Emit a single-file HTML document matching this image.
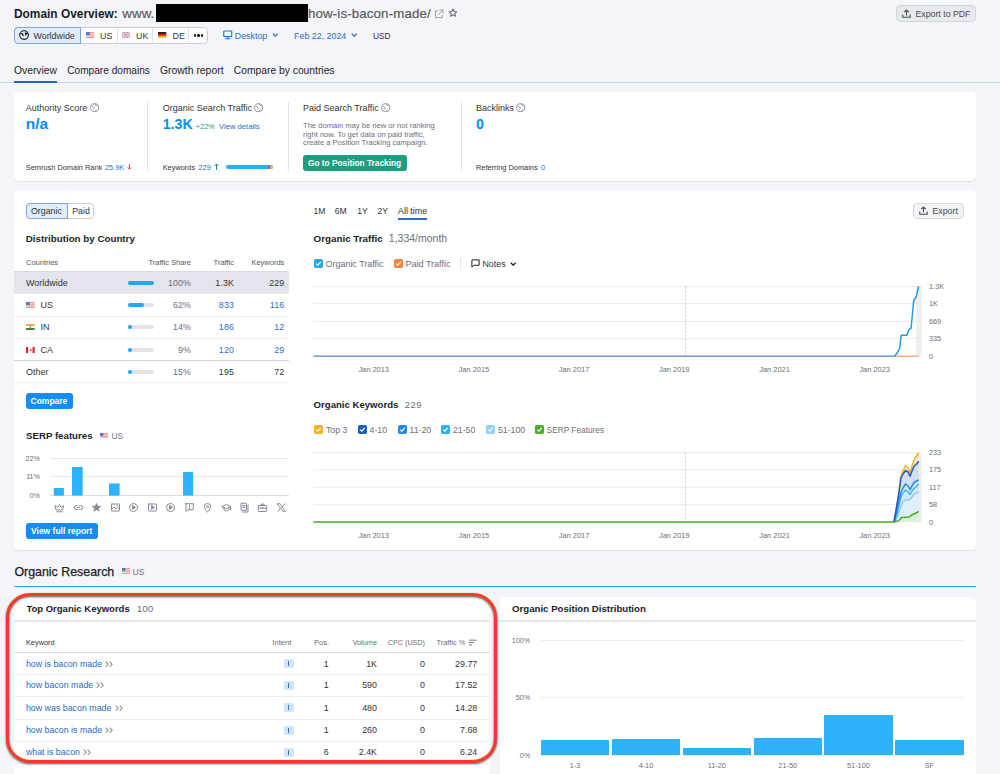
<!DOCTYPE html>
<html><head><meta charset="utf-8"><title>Domain Overview</title>
<style>
html,body{margin:0;padding:0;}
body{width:1000px;height:774px;overflow:hidden;position:relative;background:#f4f5f9;font-family:"Liberation Sans",sans-serif;}
.t{position:absolute;white-space:nowrap;line-height:1;}
.r{position:absolute;}
</style></head><body>
<div class="t" style="left:14.00px;top:9.00px;font-size:11.9px;font-weight:700;color:#1b1d26;">Domain Overview:</div>
<div class="t" style="left:122.30px;top:7.00px;font-size:13.4px;color:#585a64;-webkit-text-stroke:.2px #585a64;">www.</div>
<div class="r" style="left:155.50px;top:4.00px;width:152.00px;height:17.50px;background:#000;"></div>
<div class="t" style="left:308.00px;top:7.00px;font-size:13.3px;color:#585a64;-webkit-text-stroke:.2px #585a64;letter-spacing:.13px;">how-is-bacon-made/</div>
<svg class="r" style="left:434px;top:8.8px" width="10" height="10" viewBox="0 0 11 11" fill="none" stroke="#9a9ca6" stroke-width="1.1"><path d="M4.5 2H1.5v7.5H9V6.5"/><path d="M6 1h4v4M10 1L5 6"/></svg>
<svg class="r" style="left:447.6px;top:8.2px" width="10" height="10" viewBox="0 0 11 11" fill="none" stroke="#6c6e79" stroke-width="1.15" stroke-linejoin="round"><path d="M5.5 1l1.3 2.8 3 .3-2.3 2 .7 3-2.7-1.6-2.7 1.6.7-3-2.3-2 3-.3z"/></svg>
<div class="r" style="left:14.00px;top:27.00px;width:194.00px;height:16.50px;border:1px solid #c9ccd3;border-radius:4px;background:#fff;box-sizing:border-box;"></div>
<div class="r" style="left:14.00px;top:27.00px;width:67.00px;height:16.50px;border:1px solid #7da7e3;border-radius:4px 0 0 4px;background:#e1ecfc;box-sizing:border-box;"></div>
<div class="r" style="left:116.50px;top:28.00px;width:1.00px;height:14.50px;background:#dfe1e6;"></div>
<div class="r" style="left:152.30px;top:28.00px;width:1.00px;height:14.50px;background:#dfe1e6;"></div>
<div class="r" style="left:188.30px;top:28.00px;width:1.00px;height:14.50px;background:#dfe1e6;"></div>
<svg class="r" style="left:18.8px;top:30.2px" width="10.2" height="10.2" viewBox="0 0 12 12"><circle cx="6" cy="6" r="5.1" fill="none" stroke="#111" stroke-width="1.3"/><path d="M1.5 4.3C2.8 3.2 4.3 3.4 4.8 4.3L5.8 7.2C5.1 7.6 4.4 6.9 4 6.2L3 4.9Z" fill="#111"/><path d="M6.8 3.2C7.6 2.6 9.6 2.8 10.5 4L8.9 5.2 8 7C7.4 6.4 6.9 4.4 6.8 3.2Z" fill="#111"/></svg>
<div class="t" style="left:33.50px;top:32.00px;font-size:8.9px;color:#333438;">Worldwide</div>
<svg class="r" style="left:86px;top:32.3px" width="8.4" height="6" viewBox="0 0 14 10" preserveAspectRatio="none"><rect width="14" height="10" fill="#f58a8a"/><rect y="1.4" width="14" height="1.4" fill="#fbe3e3"/><rect y="4.2" width="14" height="1.4" fill="#fbe3e3"/><rect y="7" width="14" height="1.4" fill="#fbe3e3"/><rect width="6" height="5" fill="#5a73c4"/></svg>
<div class="t" style="left:100.00px;top:32.00px;font-size:8.9px;color:#333438;">US</div>
<svg class="r" style="left:122.4px;top:32.3px" width="8" height="6" viewBox="0 0 14 10" preserveAspectRatio="none"><rect width="14" height="10" fill="#6d7fc9"/><path d="M0 0L14 10M14 0L0 10" stroke="#fff" stroke-width="2.4"/><path d="M0 0L14 10M14 0L0 10" stroke="#e87a8a" stroke-width="1"/><path d="M7 0V10M0 5H14" stroke="#fff" stroke-width="3"/><path d="M7 0V10M0 5H14" stroke="#e86a7a" stroke-width="1.6"/></svg>
<div class="t" style="left:136.00px;top:32.00px;font-size:8.9px;color:#333438;">UK</div>
<svg class="r" style="left:158.4px;top:32.3px" width="8.3" height="6" viewBox="0 0 14 10" preserveAspectRatio="none"><rect width="14" height="3.4" fill="#222"/><rect y="3.3" width="14" height="3.4" fill="#e0302a"/><rect y="6.6" width="14" height="3.4" fill="#f6c026"/></svg>
<div class="t" style="left:172.50px;top:32.00px;font-size:8.9px;color:#333438;">DE</div>
<div class="r" style="left:193.60px;top:34.30px;width:2.40px;height:2.40px;background:#1b1d26;border-radius:50%;"></div>
<div class="r" style="left:197.20px;top:34.30px;width:2.40px;height:2.40px;background:#1b1d26;border-radius:50%;"></div>
<div class="r" style="left:200.80px;top:34.30px;width:2.40px;height:2.40px;background:#1b1d26;border-radius:50%;"></div>
<svg class="r" style="left:223px;top:30px" width="9.5" height="10" viewBox="0 0 10 10" fill="none" stroke="#2a6fd0" stroke-width="1.2"><rect x="0.8" y="0.8" width="8.4" height="5.8" rx="0.6"/><path d="M5 6.6v2.2M2.5 9h5"/></svg>
<div class="t" style="left:234.80px;top:32.00px;font-size:8.85px;color:#2a6fd0;">Desktop</div>
<svg class="r" style="left:272px;top:33px" width="6.5" height="4.5" viewBox="0 0 7 5" fill="none" stroke="#2a6fd0" stroke-width="1.3"><path d="M.8 .8L3.5 3.6 6.2 .8"/></svg>
<div class="t" style="left:294.10px;top:32.00px;font-size:8.85px;color:#2a6fd0;">Feb 22, 2024</div>
<svg class="r" style="left:350.8px;top:33px" width="6.5" height="4.5" viewBox="0 0 7 5" fill="none" stroke="#2a6fd0" stroke-width="1.3"><path d="M.8 .8L3.5 3.6 6.2 .8"/></svg>
<div class="t" style="left:373.00px;top:32.00px;font-size:8.3px;color:#333438;">USD</div>
<div class="r" style="left:896.00px;top:5.40px;width:79.60px;height:16.20px;background:#e8e9ee;border:1px solid #d3d5dc;border-radius:4px;box-sizing:border-box;"></div>
<svg class="r" style="left:901.5px;top:9px" width="9" height="9" viewBox="0 0 9 9" fill="none" stroke="#4a4c55" stroke-width="1.1"><path d="M4.5 6.5V1M2.2 3.2L4.5 1l2.3 2.2M.8 5.5v2.7h7.4V5.5"/></svg>
<div class="t" style="left:915.50px;top:10.00px;font-size:8.75px;color:#4a4c55;">Export to PDF</div>
<div class="t" style="left:14.00px;top:66.00px;font-size:10.3px;color:#1b1d26;">Overview</div>
<div class="t" style="left:67.20px;top:66.00px;font-size:10.15px;color:#1b1d26;">Compare domains</div>
<div class="t" style="left:160.00px;top:66.00px;font-size:10.4px;color:#1b1d26;">Growth report</div>
<div class="t" style="left:233.80px;top:66.00px;font-size:10.3px;color:#1b1d26;">Compare by countries</div>
<div class="r" style="left:0.00px;top:82.00px;width:1000.00px;height:1.00px;background:#d5d7de;"></div>
<div class="r" style="left:14.00px;top:80.80px;width:43.00px;height:1.80px;background:#1f66d1;"></div>
<div class="r" style="left:14.00px;top:92.00px;width:962.00px;height:89.00px;background:#fff;border-radius:5px;box-shadow:0 1px 1px rgba(0,0,0,.08);"></div>
<div class="t" style="left:25.70px;top:104.00px;font-size:9px;color:#333438;">Authority Score</div>
<svg class="r" style="left:89.7px;top:102.9px" width="9.4" height="9.4" viewBox="0 0 10 10" fill="none" stroke="#8a8d9a" stroke-width="1"><circle cx="5" cy="5" r="4.3"/><path d="M2.2 3.8c.8-.2 1.4 0 1.7.6s.9.7.6 1.6-.8.6-1.2 1.2M5.6 1.2c0 .7.3 1.2 1 1.2s1.3.2 1.6 1M5.8 8.7c.1-.7.5-1.3 1.3-1.5"/></svg>
<div class="t" style="left:25.70px;top:116.00px;font-size:15.5px;font-weight:700;color:#008ff8;">n/a</div>
<div class="t" style="left:25.80px;top:164.00px;font-size:7.4px;color:#333438;">Semrush Domain Rank</div>
<div class="t" style="left:105.00px;top:164.00px;font-size:7.3px;color:#2c6ecb;">25.9K</div>
<svg class="r" style="left:127px;top:164px" width="5" height="6" viewBox="0 0 5 7" fill="none" stroke="#e5343a" stroke-width="1"><path d="M2.5 0v6M.5 4l2 2 2-2"/></svg>
<div class="r" style="left:147.30px;top:102.00px;width:1.00px;height:69.00px;background:#e3e4e8;"></div>
<div class="t" style="left:162.70px;top:104.00px;font-size:9px;color:#333438;">Organic Search Traffic</div>
<svg class="r" style="left:254.2px;top:102.9px" width="9.4" height="9.4" viewBox="0 0 10 10" fill="none" stroke="#8a8d9a" stroke-width="1"><circle cx="5" cy="5" r="4.3"/><path d="M2.2 3.8c.8-.2 1.4 0 1.7.6s.9.7.6 1.6-.8.6-1.2 1.2M5.6 1.2c0 .7.3 1.2 1 1.2s1.3.2 1.6 1M5.8 8.7c.1-.7.5-1.3 1.3-1.5"/></svg>
<div class="t" style="left:162.70px;top:117.00px;font-size:14.2px;font-weight:700;color:#008ff8;">1.3K</div>
<div class="t" style="left:195.80px;top:123.00px;font-size:7.4px;color:#1a9a74;letter-spacing:-.15px;">+22%</div>
<div class="t" style="left:219.00px;top:123.00px;font-size:7.65px;color:#2c6ecb;">View details</div>
<div class="t" style="left:162.70px;top:164.00px;font-size:7.4px;color:#333438;">Keywords</div>
<div class="t" style="left:198.50px;top:164.00px;font-size:7.4px;color:#2c6ecb;">229</div>
<svg class="r" style="left:214px;top:163px" width="5" height="7" viewBox="0 0 5 7" fill="none" stroke="#1a9a74" stroke-width="1"><path d="M2.5 7V1M.5 3l2-2 2 2"/></svg>
<div class="r" style="left:226.00px;top:164.80px;width:47.00px;height:4.00px;background:#2bb0fb;border-radius:2px;"></div>
<div class="r" style="left:267.50px;top:164.80px;width:2.00px;height:4.00px;background:#8a5cf0;"></div>
<div class="r" style="left:269.50px;top:164.80px;width:3.50px;height:4.00px;background:#ffb020;border-radius:0 2px 2px 0;"></div>
<div class="r" style="left:288.00px;top:102.00px;width:1.00px;height:69.00px;background:#e3e4e8;"></div>
<div class="t" style="left:303.00px;top:104.00px;font-size:9px;color:#333438;">Paid Search Traffic</div>
<svg class="r" style="left:381.2px;top:102.9px" width="9.4" height="9.4" viewBox="0 0 10 10" fill="none" stroke="#8a8d9a" stroke-width="1"><circle cx="5" cy="5" r="4.3"/><path d="M2.2 3.8c.8-.2 1.4 0 1.7.6s.9.7.6 1.6-.8.6-1.2 1.2M5.6 1.2c0 .7.3 1.2 1 1.2s1.3.2 1.6 1M5.8 8.7c.1-.7.5-1.3 1.3-1.5"/></svg>
<div class="t" style="left:303.00px;top:122.00px;font-size:7.6px;color:#6c6e79;">The domain may be new or not ranking</div>
<div class="t" style="left:303.00px;top:131.00px;font-size:7.6px;color:#6c6e79;">right now. To get data on paid traffic,</div>
<div class="t" style="left:303.00px;top:139.00px;font-size:7.6px;color:#6c6e79;">create a Position Tracking campaign.</div>
<div class="r" style="left:303.00px;top:155.00px;width:103.50px;height:15.50px;background:#1b9e7e;border-radius:3px;"></div>
<div class="t" style="left:308.00px;top:159.00px;font-size:8.3px;font-weight:700;color:#fff;">Go to Position Tracking</div>
<div class="r" style="left:461.00px;top:102.00px;width:1.00px;height:69.00px;background:#e3e4e8;"></div>
<div class="t" style="left:476.00px;top:104.00px;font-size:9px;color:#333438;">Backlinks</div>
<svg class="r" style="left:516.2px;top:102.9px" width="9.4" height="9.4" viewBox="0 0 10 10" fill="none" stroke="#8a8d9a" stroke-width="1"><circle cx="5" cy="5" r="4.3"/><path d="M2.2 3.8c.8-.2 1.4 0 1.7.6s.9.7.6 1.6-.8.6-1.2 1.2M5.6 1.2c0 .7.3 1.2 1 1.2s1.3.2 1.6 1M5.8 8.7c.1-.7.5-1.3 1.3-1.5"/></svg>
<div class="t" style="left:476.00px;top:117.00px;font-size:14.2px;font-weight:700;color:#008ff8;">0</div>
<div class="t" style="left:476.00px;top:164.00px;font-size:7.4px;color:#333438;">Referring Domains</div>
<div class="t" style="left:541.00px;top:164.00px;font-size:7.4px;color:#2c6ecb;">0</div>
<div class="r" style="left:14.00px;top:190.00px;width:962.00px;height:359.80px;background:#fff;border-radius:5px;box-shadow:0 1px 1px rgba(0,0,0,.08);"></div>
<div class="r" style="left:26.00px;top:202.50px;width:68.00px;height:16.50px;border:1px solid #c9ccd3;border-radius:4px;background:#fff;box-sizing:border-box;"></div>
<div class="r" style="left:26.00px;top:202.50px;width:41.80px;height:16.50px;border:1px solid #7da7e3;border-radius:4px 0 0 4px;background:#e1ecfc;box-sizing:border-box;"></div>
<div class="t" style="left:31.00px;top:207.00px;font-size:8.8px;color:#333438;">Organic</div>
<div class="t" style="left:72.20px;top:207.00px;font-size:8.8px;color:#333438;">Paid</div>
<div class="t" style="left:25.80px;top:234.00px;font-size:9.78px;font-weight:700;color:#1b1d26;">Distribution by Country</div>
<div class="t" style="left:26.00px;top:259.00px;font-size:7.5px;color:#55575f;">Countries</div>
<div class="t" style="right:809.00px;top:259.00px;font-size:7.5px;color:#55575f;">Traffic Share</div>
<div class="t" style="right:766.00px;top:259.00px;font-size:7.5px;color:#55575f;">Traffic</div>
<div class="t" style="right:715.70px;top:259.00px;font-size:7.5px;color:#55575f;">Keywords</div>
<div class="r" style="left:14.00px;top:270.80px;width:275.00px;height:1.00px;background:#d9dbe1;"></div>
<div class="r" style="left:14.00px;top:271.80px;width:275.00px;height:22.10px;background:#e4e5ec;"></div>
<div class="t" style="left:26.00px;top:279.00px;font-size:9px;color:#333438;">Worldwide</div>
<div class="r" style="left:127.70px;top:280.85px;width:25.90px;height:4.00px;background:#e2e4e9;border-radius:2px;"></div>
<div class="r" style="left:127.70px;top:280.85px;width:25.90px;height:4.00px;background:#1ea7fd;border-radius:2px;"></div>
<div class="t" style="right:809.00px;top:279.00px;font-size:8.8px;color:#6c6e79;letter-spacing:.15px;">100%</div>
<div class="t" style="right:766.00px;top:279.00px;font-size:8.8px;color:#333438;letter-spacing:.15px;">1.3K</div>
<div class="t" style="right:715.70px;top:279.00px;font-size:8.8px;color:#333438;letter-spacing:.15px;">229</div>
<svg class="r" style="left:26px;top:302.0px" width="8.7" height="6" viewBox="0 0 14 10" preserveAspectRatio="none"><rect width="14" height="10" fill="#f58a8a"/><rect y="1.4" width="14" height="1.4" fill="#fbe3e3"/><rect y="4.2" width="14" height="1.4" fill="#fbe3e3"/><rect y="7" width="14" height="1.4" fill="#fbe3e3"/><rect width="6" height="5" fill="#5a73c4"/></svg>
<div class="t" style="left:40.40px;top:301.00px;font-size:9px;color:#333438;">US</div>
<div class="r" style="left:127.70px;top:303.00px;width:25.90px;height:4.00px;background:#e2e4e9;border-radius:2px;"></div>
<div class="r" style="left:127.70px;top:303.00px;width:16.06px;height:4.00px;background:#1ea7fd;border-radius:2px;"></div>
<div class="t" style="right:809.00px;top:301.00px;font-size:8.8px;color:#6c6e79;letter-spacing:.15px;">62%</div>
<div class="t" style="right:766.00px;top:301.00px;font-size:8.8px;color:#2c6ecb;letter-spacing:.15px;">833</div>
<div class="t" style="right:715.70px;top:301.00px;font-size:8.8px;color:#2c6ecb;letter-spacing:.15px;">116</div>
<div class="r" style="left:14.00px;top:293.40px;width:275.00px;height:1.00px;background:#eceef1;"></div>
<svg class="r" style="left:26px;top:324.25px" width="8.7" height="6" viewBox="0 0 14 10" preserveAspectRatio="none"><rect width="14" height="3.4" fill="#f7a35c"/><rect y="3.3" width="14" height="3.4" fill="#fff"/><rect y="6.6" width="14" height="3.4" fill="#3a8a3a"/><circle cx="7" cy="5" r="1.1" fill="#334"/></svg>
<div class="t" style="left:40.40px;top:323.00px;font-size:9px;color:#333438;">IN</div>
<div class="r" style="left:127.70px;top:325.25px;width:25.90px;height:4.00px;background:#e2e4e9;border-radius:2px;"></div>
<div class="r" style="left:127.70px;top:325.25px;width:4.00px;height:4.00px;background:#1ea7fd;border-radius:2px;"></div>
<div class="t" style="right:809.00px;top:323.00px;font-size:8.8px;color:#6c6e79;letter-spacing:.15px;">14%</div>
<div class="t" style="right:766.00px;top:323.00px;font-size:8.8px;color:#2c6ecb;letter-spacing:.15px;">186</div>
<div class="t" style="right:715.70px;top:323.00px;font-size:8.8px;color:#2c6ecb;letter-spacing:.15px;">12</div>
<div class="r" style="left:14.00px;top:315.60px;width:275.00px;height:1.00px;background:#eceef1;"></div>
<svg class="r" style="left:26px;top:346.5px" width="8.7" height="6" viewBox="0 0 14 10" preserveAspectRatio="none"><rect width="14" height="10" fill="#fff"/><rect width="3.5" height="10" fill="#e5202a"/><rect x="10.5" width="3.5" height="10" fill="#e5202a"/><path d="M7 2l.8 1.6 1-.4-.4 2 1-.3-.5 1.3H6.1l-.5-1.3 1 .3-.4-2 1 .4z" fill="#e5202a"/></svg>
<div class="t" style="left:40.40px;top:346.00px;font-size:9px;color:#333438;">CA</div>
<div class="r" style="left:127.70px;top:347.50px;width:25.90px;height:4.00px;background:#e2e4e9;border-radius:2px;"></div>
<div class="r" style="left:127.70px;top:347.50px;width:4.00px;height:4.00px;background:#1ea7fd;border-radius:2px;"></div>
<div class="t" style="right:809.00px;top:346.00px;font-size:8.8px;color:#6c6e79;letter-spacing:.15px;">9%</div>
<div class="t" style="right:766.00px;top:346.00px;font-size:8.8px;color:#2c6ecb;letter-spacing:.15px;">120</div>
<div class="t" style="right:715.70px;top:346.00px;font-size:8.8px;color:#2c6ecb;letter-spacing:.15px;">29</div>
<div class="r" style="left:14.00px;top:337.90px;width:275.00px;height:1.00px;background:#eceef1;"></div>
<div class="t" style="left:26.00px;top:368.00px;font-size:9px;color:#333438;">Other</div>
<div class="r" style="left:127.70px;top:369.70px;width:25.90px;height:4.00px;background:#e2e4e9;border-radius:2px;"></div>
<div class="r" style="left:127.70px;top:369.70px;width:4.00px;height:4.00px;background:#1ea7fd;border-radius:2px;"></div>
<div class="t" style="right:809.00px;top:368.00px;font-size:8.8px;color:#6c6e79;letter-spacing:.15px;">15%</div>
<div class="t" style="right:766.00px;top:368.00px;font-size:8.8px;color:#333438;letter-spacing:.15px;">195</div>
<div class="t" style="right:715.70px;top:368.00px;font-size:8.8px;color:#333438;letter-spacing:.15px;">72</div>
<div class="r" style="left:14.00px;top:360.10px;width:275.00px;height:1.00px;background:#d4d6dc;"></div>
<div class="r" style="left:14.00px;top:382.30px;width:275.00px;height:1.00px;background:#eceef1;"></div>
<div class="r" style="left:26.00px;top:392.70px;width:46.70px;height:16.00px;background:#168cf6;border-radius:3px;"></div>
<div class="t" style="left:30.50px;top:397.00px;font-size:8.5px;font-weight:700;color:#fff;">Compare</div>
<div class="t" style="left:26.00px;top:431.00px;font-size:9.7px;font-weight:700;color:#1b1d26;">SERP features</div>
<svg class="r" style="left:100px;top:432.5px" width="8" height="5.6" viewBox="0 0 14 10" preserveAspectRatio="none"><rect width="14" height="10" fill="#f58a8a"/><rect y="1.4" width="14" height="1.4" fill="#fbe3e3"/><rect y="4.2" width="14" height="1.4" fill="#fbe3e3"/><rect y="7" width="14" height="1.4" fill="#fbe3e3"/><rect width="6" height="5" fill="#5a73c4"/></svg>
<div class="t" style="left:111.50px;top:432.00px;font-size:8.3px;color:#6c6e79;">US</div>
<div class="t" style="right:960.00px;top:455.00px;font-size:7.2px;color:#6c6e79;">22%</div>
<div class="r" style="left:49.80px;top:457.80px;width:239.60px;height:1.00px;background:#e8e9ee;"></div>
<div class="t" style="right:960.00px;top:473.00px;font-size:7.2px;color:#6c6e79;">11%</div>
<div class="r" style="left:49.80px;top:476.10px;width:239.60px;height:1.00px;background:#e8e9ee;"></div>
<div class="t" style="right:960.00px;top:492.00px;font-size:7.2px;color:#6c6e79;">0%</div>
<div class="r" style="left:49.80px;top:494.50px;width:239.60px;height:1.00px;background:#dcdee4;"></div>
<svg class="r" style="left:0;top:0" width="300" height="500" viewBox="0 0 300 500"><rect x="53.8" y="488" width="10.100000000000001" height="7.600000000000023" fill="#2db2fd"/><rect x="72" y="467" width="10.700000000000003" height="28.600000000000023" fill="#2db2fd"/><rect x="109" y="483.5" width="10.599999999999994" height="12.100000000000023" fill="#2db2fd"/><rect x="183" y="472" width="10.199999999999989" height="23.600000000000023" fill="#2db2fd"/></svg>
<div class="r" style="left:26.00px;top:523.00px;width:71.70px;height:16.30px;background:#168cf6;border-radius:3px;"></div>
<div class="t" style="left:31.00px;top:527.00px;font-size:8.5px;font-weight:700;color:#fff;">View full report</div>
<svg class="r" style="left:54.20px;top:502.2px" width="11" height="11" viewBox="-.5 -.5 11 11" fill="none" stroke="#888b99" stroke-width="1" stroke-linejoin="round" stroke-linecap="round"><path d="M.8 3.2L3.2 5 5 2.2 6.8 5l2.4-1.8L8 7.4H2z" fill="none"/><path d="M2.2 9.3h5.6"/></svg>
<svg class="r" style="left:72.68px;top:502.2px" width="11" height="11" viewBox="-.5 -.5 11 11" fill="none" stroke="#888b99" stroke-width="1" stroke-linejoin="round" stroke-linecap="round"><path d="M4 3H2.8a2 2 0 000 4H4M6 3h1.2a2 2 0 010 4H6M3.5 5h3"/></svg>
<svg class="r" style="left:91.16px;top:502.2px" width="11" height="11" viewBox="-.5 -.5 11 11" fill="none" stroke="#888b99" stroke-width="1" stroke-linejoin="round" stroke-linecap="round"><path d="M5 .2l1.45 3.05 3.35.35-2.55 2.25.75 3.35L5 7.45 2 9.2l.75-3.35L.2 3.6l3.35-.35z" fill="#888b99" stroke="none"/></svg>
<svg class="r" style="left:109.64px;top:502.2px" width="11" height="11" viewBox="-.5 -.5 11 11" fill="none" stroke="#888b99" stroke-width="1" stroke-linejoin="round" stroke-linecap="round"><rect x="1" y="1.5" width="8" height="7" rx=".5"/><path d="M1 7l2.5-2.5 2 2 1.5-1.5L9 7M6.5 3.5h1"/></svg>
<svg class="r" style="left:128.12px;top:502.2px" width="11" height="11" viewBox="-.5 -.5 11 11" fill="none" stroke="#888b99" stroke-width="1" stroke-linejoin="round" stroke-linecap="round"><circle cx="5" cy="5" r="4"/><path d="M4 3.3v3.4L6.6 5z" fill="#888b99"/></svg>
<svg class="r" style="left:146.60px;top:502.2px" width="11" height="11" viewBox="-.5 -.5 11 11" fill="none" stroke="#888b99" stroke-width="1" stroke-linejoin="round" stroke-linecap="round"><rect x="1" y="1.5" width="8" height="7" rx=".5"/><path d="M4 3.3v3.4L6.6 5z" fill="#888b99"/></svg>
<svg class="r" style="left:165.08px;top:502.2px" width="11" height="11" viewBox="-.5 -.5 11 11" fill="none" stroke="#888b99" stroke-width="1" stroke-linejoin="round" stroke-linecap="round"><circle cx="5" cy="5" r="4"/><path d="M4 3.3v3.4L6.6 5z" fill="#888b99"/></svg>
<svg class="r" style="left:183.56px;top:502.2px" width="11" height="11" viewBox="-.5 -.5 11 11" fill="none" stroke="#888b99" stroke-width="1" stroke-linejoin="round" stroke-linecap="round"><path d="M1.2 1.2h7.6v6H3.5L1.5 9V1.2z"/><path d="M5 2.6v2M5 5.6v.4"/></svg>
<svg class="r" style="left:202.04px;top:502.2px" width="11" height="11" viewBox="-.5 -.5 11 11" fill="none" stroke="#888b99" stroke-width="1" stroke-linejoin="round" stroke-linecap="round"><path d="M5 9.3S1.8 6.3 1.8 4.2a3.2 3.2 0 016.4 0C8.2 6.3 5 9.3 5 9.3z"/><circle cx="5" cy="4.2" r="1"/></svg>
<svg class="r" style="left:220.52px;top:502.2px" width="11" height="11" viewBox="-.5 -.5 11 11" fill="none" stroke="#888b99" stroke-width="1" stroke-linejoin="round" stroke-linecap="round"><path d="M.5 4L5 2l4.5 2L5 6z"/><path d="M2.5 5v2.5c1.5 1.2 3.5 1.2 5 0V5M9 4.2v3"/></svg>
<svg class="r" style="left:239.00px;top:502.2px" width="11" height="11" viewBox="-.5 -.5 11 11" fill="none" stroke="#888b99" stroke-width="1" stroke-linejoin="round" stroke-linecap="round"><rect x="1.5" y=".8" width="5.5" height="7" rx=".4"/><path d="M8.5 2.5v7H3M3 3h2.5M3 4.8h2.5"/></svg>
<svg class="r" style="left:257.48px;top:502.2px" width="11" height="11" viewBox="-.5 -.5 11 11" fill="none" stroke="#888b99" stroke-width="1" stroke-linejoin="round" stroke-linecap="round"><rect x=".8" y="3" width="8.4" height="6" rx=".6"/><path d="M3.5 3V1.6h3V3M.8 5.6h8.4M5 5v1.2"/></svg>
<svg class="r" style="left:275.96px;top:502.2px" width="11" height="11" viewBox="-.5 -.5 11 11" fill="none" stroke="#888b99" stroke-width="1" stroke-linejoin="round" stroke-linecap="round"><path d="M1 1.2h2.3L9 8.8H6.7zM8.6 1.2L5.6 4.6M1.4 8.8l3-3.4"/></svg>
<div class="t" style="left:313.60px;top:207.00px;font-size:8.6px;color:#333438;">1M</div>
<div class="t" style="left:334.70px;top:207.00px;font-size:8.6px;color:#333438;">6M</div>
<div class="t" style="left:357.30px;top:207.00px;font-size:8.6px;color:#333438;">1Y</div>
<div class="t" style="left:377.60px;top:207.00px;font-size:8.6px;color:#333438;">2Y</div>
<div class="t" style="left:398.00px;top:207.00px;font-size:8.9px;color:#333438;">All time</div>
<div class="r" style="left:398.00px;top:218.20px;width:29.20px;height:1.70px;background:#2a6fd0;"></div>
<div class="r" style="left:912.70px;top:202.50px;width:51.00px;height:16.30px;background:#f2f3f6;border:1px solid #d6d8de;border-radius:4px;box-sizing:border-box;"></div>
<svg class="r" style="left:918.5px;top:206.2px" width="9" height="9" viewBox="0 0 9 9" fill="none" stroke="#4a4c55" stroke-width="1.1"><path d="M4.5 6.5V1M2.2 3.2L4.5 1l2.3 2.2M.8 5.5v2.7h7.4V5.5"/></svg>
<div class="t" style="left:932.30px;top:207.00px;font-size:8.9px;color:#4a4c55;">Export</div>
<div class="t" style="left:313.60px;top:234.00px;font-size:9.8px;font-weight:700;color:#1b1d26;">Organic Traffic</div>
<div class="t" style="left:388.80px;top:233.00px;font-size:10.5px;color:#6c6e79;">1,334/month</div>
<svg class="r" style="left:313.6px;top:258.5px" width="9" height="9" viewBox="0 0 9 9"><rect width="9" height="9" rx="1.8" fill="#23a8f6"/><path d="M2.2 4.6l1.6 1.6 3-3.3" fill="none" stroke="#fff" stroke-width="1.2"/></svg>
<div class="t" style="left:325.60px;top:260.00px;font-size:8.93px;color:#6c6e79;">Organic Traffic</div>
<svg class="r" style="left:394px;top:258.5px" width="9" height="9" viewBox="0 0 9 9"><rect width="9" height="9" rx="1.8" fill="#f7863b"/><path d="M2.2 4.6l1.6 1.6 3-3.3" fill="none" stroke="#fff" stroke-width="1.2"/></svg>
<div class="t" style="left:405.60px;top:260.00px;font-size:8.99px;color:#6c6e79;">Paid Traffic</div>
<div class="r" style="left:460.00px;top:257.80px;width:1.00px;height:11.20px;background:#dfe1e6;"></div>
<svg class="r" style="left:470.7px;top:258.6px" width="9" height="9" viewBox="0 0 10 10" fill="none" stroke="#1b1d26" stroke-width="1.1"><path d="M1 1h8v6H3.2L1 9z"/></svg>
<div class="t" style="left:482.40px;top:260.00px;font-size:8.88px;color:#333438;">Notes</div>
<svg class="r" style="left:510.4px;top:261.5px" width="6.5" height="4.5" viewBox="0 0 7 5" fill="none" stroke="#1b1d26" stroke-width="1.3"><path d="M.8 .8L3.5 3.6 6.2 .8"/></svg>
<div class="t" style="left:313.60px;top:400.00px;font-size:9.6px;font-weight:700;color:#1b1d26;">Organic Keywords</div>
<div class="t" style="left:404.80px;top:400.00px;font-size:9.4px;color:#6c6e79;letter-spacing:.5px;">229</div>
<svg class="r" style="left:313.6px;top:424.7px" width="9" height="9" viewBox="0 0 9 9"><rect width="9" height="9" rx="1.8" fill="#ffb020"/><path d="M2.2 4.6l1.6 1.6 3-3.3" fill="none" stroke="#fff" stroke-width="1.2"/></svg>
<div class="t" style="left:326.00px;top:426.00px;font-size:8.7px;color:#6c6e79;">Top 3</div>
<svg class="r" style="left:357.9px;top:424.7px" width="9" height="9" viewBox="0 0 9 9"><rect width="9" height="9" rx="1.8" fill="#1b5fc6"/><path d="M2.2 4.6l1.6 1.6 3-3.3" fill="none" stroke="#fff" stroke-width="1.2"/></svg>
<div class="t" style="left:369.60px;top:426.00px;font-size:8.7px;color:#6c6e79;">4-10</div>
<svg class="r" style="left:397.9px;top:424.7px" width="9" height="9" viewBox="0 0 9 9"><rect width="9" height="9" rx="1.8" fill="#2389f5"/><path d="M2.2 4.6l1.6 1.6 3-3.3" fill="none" stroke="#fff" stroke-width="1.2"/></svg>
<div class="t" style="left:409.60px;top:426.00px;font-size:8.7px;color:#6c6e79;">11-20</div>
<svg class="r" style="left:441.2px;top:424.7px" width="9" height="9" viewBox="0 0 9 9"><rect width="9" height="9" rx="1.8" fill="#2db1fb"/><path d="M2.2 4.6l1.6 1.6 3-3.3" fill="none" stroke="#fff" stroke-width="1.2"/></svg>
<div class="t" style="left:453.00px;top:426.00px;font-size:8.7px;color:#6c6e79;">21-50</div>
<svg class="r" style="left:486px;top:424.7px" width="9" height="9" viewBox="0 0 9 9"><rect width="9" height="9" rx="1.8" fill="#93cffb"/><path d="M2.2 4.6l1.6 1.6 3-3.3" fill="none" stroke="#fff" stroke-width="1.2"/></svg>
<div class="t" style="left:498.00px;top:426.00px;font-size:8.7px;color:#6c6e79;">51-100</div>
<svg class="r" style="left:534.6px;top:424.7px" width="9" height="9" viewBox="0 0 9 9"><rect width="9" height="9" rx="1.8" fill="#4caf29"/><path d="M2.2 4.6l1.6 1.6 3-3.3" fill="none" stroke="#fff" stroke-width="1.2"/></svg>
<div class="t" style="left:546.60px;top:426.00px;font-size:8.3px;color:#6c6e79;">SERP Features</div>
<svg class="r" style="left:0;top:0" width="1000" height="774" viewBox="0 0 1000 774"><line x1="313.4" y1="286.6" x2="919" y2="286.6" stroke="#e9eaee" stroke-width="1"/><line x1="313.4" y1="303.7" x2="919" y2="303.7" stroke="#e9eaee" stroke-width="1"/><line x1="313.4" y1="321.5" x2="919" y2="321.5" stroke="#e9eaee" stroke-width="1"/><line x1="313.4" y1="338.6" x2="919" y2="338.6" stroke="#e9eaee" stroke-width="1"/><line x1="685.5" y1="286.6" x2="685.5" y2="356" stroke="#b9bcc4" stroke-width="0.8" stroke-dasharray="2,2"/><rect x="916" y="286" width="5.5" height="70" fill="#e3e6ea" opacity=".65"/><line x1="313.4" y1="356.2" x2="895" y2="356.2" stroke="#4f84c6" stroke-width="1.2"/><line x1="895" y1="356.2" x2="919" y2="356.2" stroke="#f6a36a" stroke-width="1.2"/><polyline points="894.8,356.2 898.4,351 899.5,349 901.2,335.3 906.9,335.3 909,329.7 911.1,328.2 913.7,300.5 916.1,297 918.7,286.3" fill="none" stroke="#1f97f3" stroke-width="1.45" stroke-linejoin="round"/><line x1="313.4" y1="452.5" x2="919" y2="452.5" stroke="#e9eaee" stroke-width="1"/><line x1="313.4" y1="469.8" x2="919" y2="469.8" stroke="#e9eaee" stroke-width="1"/><line x1="313.4" y1="487.3" x2="919" y2="487.3" stroke="#e9eaee" stroke-width="1"/><line x1="313.4" y1="504.6" x2="919" y2="504.6" stroke="#e9eaee" stroke-width="1"/><line x1="685.5" y1="452.5" x2="685.5" y2="522" stroke="#b9bcc4" stroke-width="0.8" stroke-dasharray="2,2"/><rect x="916" y="452" width="5.5" height="70" fill="#e3e6ea" opacity=".65"/><polygon points="894,522 897.6,501 899,492 900.5,478 902.5,472 905.5,465.6 907.5,467 910,472.7 912,466 914.7,458.5 916.5,456 918.7,453 918.7,522 894,522" fill="#fde9c8" opacity="0.7"/><polygon points="894,522 897.6,501 899,492 901,478 903,474 905.5,470.5 908,472 910,476.2 912,471 914,466.3 916.5,464 918.7,461.3 918.7,522 894,522" fill="#c9daf3" opacity="0.8"/><polygon points="894,522 897,510 899,500 901,492 903,488 905.5,484 908,486 910,489.7 912,486 914,482.6 916.5,481 918.7,479.8 918.7,522 894,522" fill="#d5e8fb" opacity="0.8"/><polygon points="894,522 897,518 899,512 901,506 903,502 905.5,500 908,500 910,499.5 912,497 914,494 916.5,493 918.7,491.8 918.7,522 894,522" fill="#e3f1fc" opacity="0.8"/><polygon points="894,522 898,521 900,519.5 901.5,517.5 905,517.3 909,517 911,515.5 912.6,514.5 915,513.5 918.7,511.5 918.7,522 894,522" fill="#d8efd0" opacity="0.8"/><polyline points="894,522 897.6,501 899,492 900.5,478 902.5,472 905.5,465.6 907.5,467 910,472.7 912,466 914.7,458.5 916.5,456 918.7,453" fill="none" stroke="#fcae1e" stroke-width="1.5" stroke-linejoin="round"/><polyline points="894,522 897,518 899,512 901,506 903,502 905.5,500 908,500 910,499.5 912,497 914,494 916.5,493 918.7,491.8" fill="none" stroke="#8ecbfb" stroke-width="1.5" stroke-linejoin="round"/><polyline points="894,522 897,514 899,505 901,497 903,493 905.5,490 908,492 910,494.5 912,491 914,488.5 916.5,486.5 918.7,484" fill="none" stroke="#3bb6fb" stroke-width="1.5" stroke-linejoin="round"/><polyline points="894,522 897,510 899,500 901,492 903,488 905.5,484 908,486 910,489.7 912,486 914,482.6 916.5,481 918.7,479.8" fill="none" stroke="#2188f3" stroke-width="1.5" stroke-linejoin="round"/><polyline points="894,522 897.6,501 899,492 901,478 903,474 905.5,470.5 908,472 910,476.2 912,471 914,466.3 916.5,464 918.7,461.3" fill="none" stroke="#1b5cc4" stroke-width="1.5" stroke-linejoin="round"/><line x1="313.4" y1="522.1" x2="894" y2="522.1" stroke="#45ad24" stroke-width="1.5"/><polyline points="894,522 898,521 900,519.5 901.5,517.5 905,517.3 909,517 911,515.5 912.6,514.5 915,513.5 918.7,511.5" fill="none" stroke="#45ad24" stroke-width="1.5" stroke-linejoin="round"/></svg>
<div class="t" style="left:928.90px;top:283.00px;font-size:7.4px;color:#6c6e79;">1.3K</div>
<div class="t" style="left:928.90px;top:300.00px;font-size:7.4px;color:#6c6e79;">1K</div>
<div class="t" style="left:928.90px;top:318.00px;font-size:7.4px;color:#6c6e79;">669</div>
<div class="t" style="left:928.90px;top:335.00px;font-size:7.4px;color:#6c6e79;">335</div>
<div class="t" style="left:928.90px;top:353.00px;font-size:7.4px;color:#6c6e79;">0</div>
<div class="t" style="left:928.90px;top:449.00px;font-size:7.4px;color:#6c6e79;">233</div>
<div class="t" style="left:928.90px;top:466.00px;font-size:7.4px;color:#6c6e79;">175</div>
<div class="t" style="left:928.90px;top:484.00px;font-size:7.4px;color:#6c6e79;">117</div>
<div class="t" style="left:928.90px;top:501.00px;font-size:7.4px;color:#6c6e79;">58</div>
<div class="t" style="left:928.90px;top:519.00px;font-size:7.4px;color:#6c6e79;">0</div>
<div class="t" style="left:73.70px;width:600px;text-align:center;top:366.00px;font-size:7.45px;color:#6c6e79;">Jan 2013</div>
<div class="t" style="left:73.70px;width:600px;text-align:center;top:532.00px;font-size:7.45px;color:#6c6e79;">Jan 2013</div>
<div class="t" style="left:173.90px;width:600px;text-align:center;top:366.00px;font-size:7.45px;color:#6c6e79;">Jan 2015</div>
<div class="t" style="left:173.90px;width:600px;text-align:center;top:532.00px;font-size:7.45px;color:#6c6e79;">Jan 2015</div>
<div class="t" style="left:274.10px;width:600px;text-align:center;top:366.00px;font-size:7.45px;color:#6c6e79;">Jan 2017</div>
<div class="t" style="left:274.10px;width:600px;text-align:center;top:532.00px;font-size:7.45px;color:#6c6e79;">Jan 2017</div>
<div class="t" style="left:374.30px;width:600px;text-align:center;top:366.00px;font-size:7.45px;color:#6c6e79;">Jan 2019</div>
<div class="t" style="left:374.30px;width:600px;text-align:center;top:532.00px;font-size:7.45px;color:#6c6e79;">Jan 2019</div>
<div class="t" style="left:474.50px;width:600px;text-align:center;top:366.00px;font-size:7.45px;color:#6c6e79;">Jan 2021</div>
<div class="t" style="left:474.50px;width:600px;text-align:center;top:532.00px;font-size:7.45px;color:#6c6e79;">Jan 2021</div>
<div class="t" style="left:574.70px;width:600px;text-align:center;top:366.00px;font-size:7.45px;color:#6c6e79;">Jan 2023</div>
<div class="t" style="left:574.70px;width:600px;text-align:center;top:532.00px;font-size:7.45px;color:#6c6e79;">Jan 2023</div>
<div class="t" style="left:14.40px;top:566.00px;font-size:12.4px;color:#1b1d26;-webkit-text-stroke:.25px #1b1d26;">Organic Research</div>
<svg class="r" style="left:122px;top:568.3px" width="8" height="5.8" viewBox="0 0 14 10" preserveAspectRatio="none"><rect width="14" height="10" fill="#f58a8a"/><rect y="1.4" width="14" height="1.4" fill="#fbe3e3"/><rect y="4.2" width="14" height="1.4" fill="#fbe3e3"/><rect y="7" width="14" height="1.4" fill="#fbe3e3"/><rect width="6" height="5" fill="#5a73c4"/></svg>
<div class="t" style="left:132.60px;top:568.00px;font-size:8.4px;color:#6c6e79;">US</div>
<div class="r" style="left:14.00px;top:585.80px;width:962.00px;height:1.10px;background:#2aa7f7;"></div>
<div class="r" style="left:14.00px;top:597.00px;width:476.20px;height:193.00px;background:#fff;border-radius:5px;box-shadow:0 1px 1px rgba(0,0,0,.06);"></div>
<div class="t" style="left:26.40px;top:604.00px;font-size:9.5px;font-weight:700;color:#1b1d26;">Top Organic Keywords</div>
<div class="t" style="left:136.80px;top:604.00px;font-size:9.9px;color:#6c6e79;">100</div>
<div class="r" style="left:14.00px;top:620.00px;width:476.20px;height:1.50px;background:#e6e7eb;"></div>
<div class="t" style="left:25.90px;top:639.00px;font-size:7.4px;color:#333438;">Keyword</div>
<div class="t" style="right:708.50px;top:639.00px;font-size:7.7px;color:#6c6e79;">Intent</div>
<div class="t" style="right:671.00px;top:639.00px;font-size:7.5px;color:#6c6e79;">Pos.</div>
<div class="t" style="right:622.90px;top:639.00px;font-size:7.4px;color:#6c6e79;">Volume</div>
<div class="t" style="right:575.00px;top:639.00px;font-size:7.2px;color:#6c6e79;">CPC (USD)</div>
<div class="t" style="right:534.70px;top:639.00px;font-size:7.4px;color:#6c6e79;">Traffic %</div>
<svg class="r" style="left:469.4px;top:639px" width="7.5" height="7" viewBox="0 0 8 7" stroke="#6c6e79" stroke-width="1"><path d="M0 1h8M0 3.5h5.5M0 6h3"/></svg>
<div class="r" style="left:14.00px;top:652.20px;width:476.20px;height:1.00px;background:#d9dbe1;"></div>
<div class="t" style="left:25.90px;top:660.00px;font-size:8.86px;color:#2a6acb;">how is bacon made</div>
<svg class="r" style="left:105.23px;top:660.65px" width="8.5" height="6.6" viewBox="0 0 8.5 6.6" fill="none" stroke="#8d8f99" stroke-width="1.05"><path d="M.7 .6L3.3 3.3 .7 6M4.6 .6L7.2 3.3 4.6 6"/></svg>
<div class="r" style="left:284.00px;top:659.25px;width:9.60px;height:9.20px;background:#cde6fd;border-radius:2px;"></div>
<div class="r" style="left:288.30px;top:661.25px;width:1.10px;height:5.20px;background:#3a70c6;"></div>
<div class="t" style="right:671.30px;top:660.00px;font-size:8.9px;color:#333438;">1</div>
<div class="t" style="right:623.00px;top:660.00px;font-size:8.9px;color:#333438;">1K</div>
<div class="t" style="right:575.00px;top:660.00px;font-size:8.9px;color:#333438;">0</div>
<div class="t" style="right:522.70px;top:660.00px;font-size:8.9px;color:#333438;">29.77</div>
<div class="r" style="left:14.00px;top:674.00px;width:476.20px;height:1.00px;background:#eceef1;"></div>
<div class="t" style="left:25.90px;top:681.00px;font-size:8.86px;color:#2a6acb;">how bacon made</div>
<svg class="r" style="left:96.37px;top:682.40px" width="8.5" height="6.6" viewBox="0 0 8.5 6.6" fill="none" stroke="#8d8f99" stroke-width="1.05"><path d="M.7 .6L3.3 3.3 .7 6M4.6 .6L7.2 3.3 4.6 6"/></svg>
<div class="r" style="left:284.00px;top:681.00px;width:9.60px;height:9.20px;background:#cde6fd;border-radius:2px;"></div>
<div class="r" style="left:288.30px;top:683.00px;width:1.10px;height:5.20px;background:#3a70c6;"></div>
<div class="t" style="right:671.30px;top:681.00px;font-size:8.9px;color:#333438;">1</div>
<div class="t" style="right:623.00px;top:681.00px;font-size:8.9px;color:#333438;">590</div>
<div class="t" style="right:575.00px;top:681.00px;font-size:8.9px;color:#333438;">0</div>
<div class="t" style="right:522.70px;top:681.00px;font-size:8.9px;color:#333438;">17.52</div>
<div class="r" style="left:14.00px;top:696.20px;width:476.20px;height:1.00px;background:#eceef1;"></div>
<div class="t" style="left:25.90px;top:704.00px;font-size:8.86px;color:#2a6acb;">how was bacon made</div>
<svg class="r" style="left:114.59px;top:704.65px" width="8.5" height="6.6" viewBox="0 0 8.5 6.6" fill="none" stroke="#8d8f99" stroke-width="1.05"><path d="M.7 .6L3.3 3.3 .7 6M4.6 .6L7.2 3.3 4.6 6"/></svg>
<div class="r" style="left:284.00px;top:703.25px;width:9.60px;height:9.20px;background:#cde6fd;border-radius:2px;"></div>
<div class="r" style="left:288.30px;top:705.25px;width:1.10px;height:5.20px;background:#3a70c6;"></div>
<div class="t" style="right:671.30px;top:704.00px;font-size:8.9px;color:#333438;">1</div>
<div class="t" style="right:623.00px;top:704.00px;font-size:8.9px;color:#333438;">480</div>
<div class="t" style="right:575.00px;top:704.00px;font-size:8.9px;color:#333438;">0</div>
<div class="t" style="right:522.70px;top:704.00px;font-size:8.9px;color:#333438;">14.28</div>
<div class="r" style="left:14.00px;top:718.50px;width:476.20px;height:1.00px;background:#eceef1;"></div>
<div class="t" style="left:25.90px;top:726.00px;font-size:8.86px;color:#2a6acb;">how bacon is made</div>
<svg class="r" style="left:105.23px;top:726.90px" width="8.5" height="6.6" viewBox="0 0 8.5 6.6" fill="none" stroke="#8d8f99" stroke-width="1.05"><path d="M.7 .6L3.3 3.3 .7 6M4.6 .6L7.2 3.3 4.6 6"/></svg>
<div class="r" style="left:284.00px;top:725.50px;width:9.60px;height:9.20px;background:#cde6fd;border-radius:2px;"></div>
<div class="r" style="left:288.30px;top:727.50px;width:1.10px;height:5.20px;background:#3a70c6;"></div>
<div class="t" style="right:671.30px;top:726.00px;font-size:8.9px;color:#333438;">1</div>
<div class="t" style="right:623.00px;top:726.00px;font-size:8.9px;color:#333438;">260</div>
<div class="t" style="right:575.00px;top:726.00px;font-size:8.9px;color:#333438;">0</div>
<div class="t" style="right:522.70px;top:726.00px;font-size:8.9px;color:#333438;">7.68</div>
<div class="r" style="left:14.00px;top:740.70px;width:476.20px;height:1.00px;background:#eceef1;"></div>
<div class="t" style="left:25.90px;top:748.00px;font-size:8.86px;color:#2a6acb;">what is bacon</div>
<svg class="r" style="left:83.07px;top:749.15px" width="8.5" height="6.6" viewBox="0 0 8.5 6.6" fill="none" stroke="#8d8f99" stroke-width="1.05"><path d="M.7 .6L3.3 3.3 .7 6M4.6 .6L7.2 3.3 4.6 6"/></svg>
<div class="r" style="left:284.00px;top:747.75px;width:9.60px;height:9.20px;background:#cde6fd;border-radius:2px;"></div>
<div class="r" style="left:288.30px;top:749.75px;width:1.10px;height:5.20px;background:#3a70c6;"></div>
<div class="t" style="right:671.30px;top:748.00px;font-size:8.9px;color:#333438;">6</div>
<div class="t" style="right:623.00px;top:748.00px;font-size:8.9px;color:#333438;">2.4K</div>
<div class="t" style="right:575.00px;top:748.00px;font-size:8.9px;color:#333438;">0</div>
<div class="t" style="right:522.70px;top:748.00px;font-size:8.9px;color:#333438;">6.24</div>
<div class="r" style="left:14.00px;top:763.00px;width:476.20px;height:1.00px;background:#eceef1;"></div>
<div class="r" style="left:499.80px;top:597.00px;width:476.20px;height:193.00px;background:#fff;border-radius:5px;box-shadow:0 1px 1px rgba(0,0,0,.06);"></div>
<div class="t" style="left:512.10px;top:604.00px;font-size:9.65px;font-weight:700;color:#1b1d26;">Organic Position Distribution</div>
<div class="r" style="left:499.80px;top:620.00px;width:476.20px;height:1.50px;background:#e6e7eb;"></div>
<div class="t" style="right:469.80px;top:637.00px;font-size:7.2px;color:#6c6e79;">100%</div>
<div class="r" style="left:540.60px;top:639.50px;width:423.00px;height:1.00px;background:#eceef1;"></div>
<div class="t" style="right:469.80px;top:694.00px;font-size:7.2px;color:#6c6e79;">50%</div>
<div class="r" style="left:540.60px;top:697.00px;width:423.00px;height:1.00px;background:#eceef1;"></div>
<div class="t" style="right:469.80px;top:752.00px;font-size:7.2px;color:#6c6e79;">0%</div>
<div class="r" style="left:540.60px;top:754.50px;width:423.00px;height:1.00px;background:#eceef1;"></div>
<div class="r" style="left:540.80px;top:740.00px;width:68.30px;height:15.00px;background:#2db1fb;border-radius:1px 1px 0 0;"></div>
<div class="t" style="left:274.95px;width:600px;text-align:center;top:762.00px;font-size:7.3px;color:#6c6e79;">1-3</div>
<div class="r" style="left:612.00px;top:738.80px;width:67.90px;height:16.20px;background:#2db1fb;border-radius:1px 1px 0 0;"></div>
<div class="t" style="left:345.95px;width:600px;text-align:center;top:762.00px;font-size:7.3px;color:#6c6e79;">4-10</div>
<div class="r" style="left:682.70px;top:747.90px;width:68.20px;height:7.10px;background:#2db1fb;border-radius:1px 1px 0 0;"></div>
<div class="t" style="left:416.80px;width:600px;text-align:center;top:762.00px;font-size:7.3px;color:#6c6e79;">11-20</div>
<div class="r" style="left:753.50px;top:738.00px;width:68.40px;height:17.00px;background:#2db1fb;border-radius:1px 1px 0 0;"></div>
<div class="t" style="left:487.70px;width:600px;text-align:center;top:762.00px;font-size:7.3px;color:#6c6e79;">21-50</div>
<div class="r" style="left:824.00px;top:714.60px;width:68.90px;height:40.40px;background:#2db1fb;border-radius:1px 1px 0 0;"></div>
<div class="t" style="left:558.45px;width:600px;text-align:center;top:762.00px;font-size:7.3px;color:#6c6e79;">51-100</div>
<div class="r" style="left:895.20px;top:739.80px;width:68.40px;height:15.20px;background:#2db1fb;border-radius:1px 1px 0 0;"></div>
<div class="t" style="left:629.40px;width:600px;text-align:center;top:762.00px;font-size:7.3px;color:#6c6e79;">SF</div>
<div class="r" style="left:6px;top:592.6px;width:491.4px;height:170.6px;border:3.3px solid #ff3a22;border-radius:24px;box-sizing:border-box;filter:drop-shadow(0 1.7px .9px rgba(45,65,70,.85));"></div>
</body></html>
